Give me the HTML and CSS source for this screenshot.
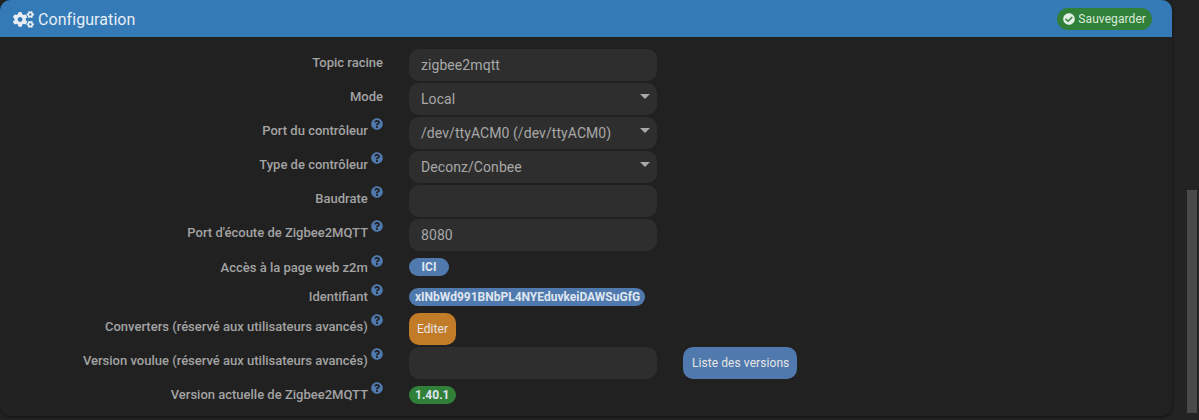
FILE: index.html
```html
<!DOCTYPE html>
<html lang="fr">
<head>
    <meta charset="UTF-8">
    <title>Configuration</title>
    <link rel="stylesheet" href="styles.css">
</head>
<body>

    <svg class="icon-defs" width="0" height="0">
        <symbol id="help" viewBox="0 0 512 512">
            <path d="M504 256c0 136.997-111.043 248-248 248S8 392.997 8 256C8 119.083 119.043 8 256 8s248 111.083 248 248zM262.655 90c-54.497 0-89.255 22.957-116.549 63.758-3.536 5.286-2.353 12.415 2.715 16.258l34.699 26.31c5.205 3.947 12.621 3.008 16.665-2.122 17.864-22.658 30.113-35.797 57.303-35.797 20.429 0 45.698 13.148 45.698 32.958 0 14.976-12.363 22.667-32.534 33.976C247.128 238.528 216 254.941 216 296v4c0 6.627 5.373 12 12 12h56c6.627 0 12-5.373 12-12v-1.333c0-28.462 83.186-29.647 83.186-106.667 0-58.002-60.165-102-116.531-102zM256 338c-25.365 0-46 20.635-46 46 0 25.364 20.635 46 46 46s46-20.636 46-46c0-25.365-20.635-46-46-46z"/>
        </symbol>
    </svg>

    <div class="panel">
        <div class="panel-heading">
            <h3 class="panel-title">
                <svg class="icon-cogs" viewBox="0 0 640 512"><path d="M512.1 191l-8.2 14.3c-3 5.3-9.4 7.5-15.1 5.4-11.8-4.4-22.6-10.7-32.1-18.6-4.6-3.8-5.8-10.5-2.8-15.7l8.2-14.3c-6.9-8-12.3-17.3-15.9-27.4h-16.5c-6 0-11.2-4.3-12.2-10.3-2-12-2.1-24.6 0-37.1 1-6 6.2-10.4 12.2-10.4h16.5c3.6-10.1 9-19.4 15.9-27.4l-8.2-14.3c-3-5.2-1.9-11.9 2.8-15.7 9.5-7.9 20.4-14.2 32.1-18.6 5.7-2.1 12.1.1 15.1 5.4l8.2 14.3c10.5-1.9 21.2-1.9 31.7 0L552 6.3c3-5.3 9.4-7.5 15.1-5.4 11.8 4.4 22.6 10.7 32.1 18.6 4.6 3.8 5.8 10.5 2.8 15.7l-8.2 14.3c6.9 8 12.3 17.3 15.9 27.4h16.5c6 0 11.2 4.3 12.2 10.3 2 12 2.1 24.6 0 37.1-1 6-6.2 10.4-12.2 10.4h-16.5c-3.6 10.1-9 19.4-15.9 27.4l8.2 14.3c3 5.2 1.9 11.9-2.8 15.7-9.5 7.9-20.4 14.2-32.1 18.6-5.7 2.1-12.1-.1-15.1-5.4l-8.2-14.3c-10.4 1.9-21.2 1.9-31.7 0zm-10.5-58.8c38.5 29.6 82.4-14.3 52.8-52.8-38.5-29.7-82.4 14.3-52.8 52.8zM386.3 286.1l33.7 16.8c10.1 5.8 14.5 18.1 10.5 29.1-8.9 24.2-26.4 46.4-42.6 65.8-7.4 8.9-20.2 11.1-30.3 5.3l-29.1-16.8c-16 13.7-34.6 24.6-54.9 31.7v33.6c0 11.6-8.3 21.6-19.7 23.6-24.6 4.2-50.4 4.4-75.9 0-11.5-2-20-11.9-20-23.6V418c-20.3-7.2-38.9-18-54.9-31.7L74 403c-10 5.8-22.9 3.6-30.3-5.3-16.2-19.4-33.3-41.6-42.2-65.7-4-10.9.4-23.2 10.5-29.1l33.3-16.8c-3.9-20.9-3.9-42.4 0-63.4L12 205.8c-10.1-5.8-14.6-18.1-10.5-29 8.9-24.2 26-46.4 42.2-65.8 7.4-8.9 20.2-11.1 30.3-5.3l29.1 16.8c16-13.7 34.6-24.6 54.9-31.7V57.1c0-11.5 8.2-21.5 19.6-23.5 24.6-4.2 50.5-4.4 76-.1 11.5 2 20 11.9 20 23.6v33.6c20.3 7.2 38.9 18 54.9 31.7l29.1-16.8c10-5.8 22.9-3.6 30.3 5.3 16.2 19.4 33.2 41.6 42.1 65.8 4 10.9.1 23.2-10 29.1l-33.7 16.8c3.9 21 3.9 42.5 0 63.5zm-117.6 21.1c59.2-77-28.7-164.9-105.7-105.7-59.2 77 28.7 164.9 105.7 105.7zm243.4 182.7l-8.2 14.3c-3 5.3-9.4 7.5-15.1 5.4-11.8-4.4-22.6-10.7-32.1-18.6-4.6-3.8-5.8-10.5-2.8-15.7l8.2-14.3c-6.9-8-12.3-17.3-15.9-27.4h-16.5c-6 0-11.2-4.3-12.2-10.3-2-12-2.1-24.6 0-37.1 1-6 6.2-10.4 12.2-10.4h16.5c3.6-10.1 9-19.4 15.9-27.4l-8.2-14.3c-3-5.2-1.9-11.9 2.8-15.7 9.5-7.9 20.4-14.2 32.1-18.6 5.7-2.1 12.1.1 15.1 5.4l8.2 14.3c10.5-1.9 21.2-1.9 31.7 0l8.2-14.3c3-5.3 9.4-7.5 15.1-5.4 11.8 4.4 22.6 10.7 32.1 18.6 4.6 3.8 5.8 10.5 2.8 15.7l-8.2 14.3c6.9 8 12.3 17.3 15.9 27.4h16.5c6 0 11.2 4.3 12.2 10.3 2 12 2.1 24.6 0 37.1-1 6-6.2 10.4-12.2 10.4h-16.5c-3.6 10.1-9 19.4-15.9 27.4l8.2 14.3c3 5.2 1.9 11.9-2.8 15.7-9.5 7.9-20.4 14.2-32.1 18.6-5.7 2.1-12.1-.1-15.1-5.4l-8.2-14.3c-10.4 1.9-21.2 1.9-31.7 0zM501.6 431c38.5 29.6 82.4-14.3 52.8-52.8-38.5-29.6-82.4 14.3-52.8 52.8z"/></svg>
                Configuration
            </h3>
            <a class="btn-save">
                <svg class="icon-check" viewBox="0 0 512 512"><path d="M504 256c0 136.967-111.033 248-248 248S8 392.967 8 256 119.033 8 256 8s248 111.033 248 248zM227.314 387.314l184-184c6.248-6.248 6.248-16.379 0-22.627l-22.627-22.627c-6.248-6.249-16.379-6.249-22.628 0L216 308.118l-70.059-70.059c-6.248-6.248-16.379-6.248-22.628 0l-22.627 22.627c-6.248 6.248-6.248 16.379 0 22.627l104 104c6.249 6.249 16.379 6.249 22.628 0z"/></svg>
                Sauvegarder
            </a>
        </div>

        <form class="panel-body">
            <div class="form-row">
                <label class="form-label">Topic racine</label>
                <input class="form-control" type="text" value="zigbee2mqtt">
            </div>
            <div class="form-row">
                <label class="form-label">Mode</label>
                <div class="select-wrap">
                    <select class="form-control"><option>Local</option></select>
                </div>
            </div>
            <div class="form-row">
                <label class="form-label">Port du contrôleur <svg class="help"><use href="#help"/></svg></label>
                <div class="select-wrap">
                    <select class="form-control"><option>/dev/ttyACM0 (/dev/ttyACM0)</option></select>
                </div>
            </div>
            <div class="form-row">
                <label class="form-label">Type de contrôleur <svg class="help"><use href="#help"/></svg></label>
                <div class="select-wrap">
                    <select class="form-control"><option>Deconz/Conbee</option></select>
                </div>
            </div>
            <div class="form-row">
                <label class="form-label">Baudrate <svg class="help"><use href="#help"/></svg></label>
                <input class="form-control" type="text">
            </div>
            <div class="form-row">
                <label class="form-label">Port d'écoute de Zigbee2MQTT <svg class="help"><use href="#help"/></svg></label>
                <input class="form-control" type="text" value="8080">
            </div>
            <div class="form-row form-row-small">
                <label class="form-label form-label-low">Accès à la page web z2m <svg class="help"><use href="#help"/></svg></label>
                <span class="pill pill-ici">ICI</span>
            </div>
            <div class="form-row form-row-small">
                <label class="form-label">Identifiant <svg class="help"><use href="#help"/></svg></label>
                <span class="pill pill-id">xINbWd991BNbPL4NYEduvkeiDAWSuGfG</span>
            </div>
            <div class="form-row">
                <label class="form-label">Converters (réservé aux utilisateurs avancés) <svg class="help"><use href="#help"/></svg></label>
                <a class="btn btn-warning">Editer</a>
            </div>
            <div class="form-row">
                <label class="form-label">Version voulue (réservé aux utilisateurs avancés) <svg class="help"><use href="#help"/></svg></label>
                <input class="form-control" type="text">
                <a class="btn btn-primary">Liste des versions</a>
            </div>
            <div class="form-row form-row-small">
                <label class="form-label">Version actuelle de Zigbee2MQTT <svg class="help"><use href="#help"/></svg></label>
                <span class="pill pill-success">1.40.1</span>
            </div>
        </form>
    </div>

    <div class="scrollbar"></div>

</body>
</html>
```

FILE: styles.css
```css
html, body {
    height: 100%;
}
body {
    font-family: 'Roboto', sans-serif;
    font-size: 13px;
    background-color: #232323;
    color: #aaa;
    margin: 0;
    overflow: hidden;
}
.icon-defs {
    position: absolute;
}
.panel {
    width: 1172px;
    height: 416px;
    background-color: #212121;
    border-radius: 10px;
    box-shadow: 0 1px 3px rgba(0, 0, 0, 0.5);
}
.panel-heading {
    height: 37px;
    box-sizing: border-box;
    display: flex;
    justify-content: space-between;
    align-items: center;
    padding: 1px 20px 0 13px;
    background-color: #337ab7;
    border-radius: 10px 10px 0 0;
}
.panel-title {
    display: flex;
    align-items: center;
    gap: 4px;
    margin: 0;
    font-size: 16px;
    font-weight: 400;
    letter-spacing: 0.07px;
    color: #e8eef4;
}
.icon-cogs {
    width: 21px;
    height: 17px;
    fill: #e8eef4;
}
.btn-save {
    display: flex;
    align-items: center;
    gap: 3px;
    height: 22px;
    padding: 0 6px;
    border-radius: 11px;
    background-color: #318039;
    color: #dcebdc;
    font-size: 12px;
    letter-spacing: 0.08px;
}
.icon-check {
    width: 12px;
    height: 12px;
    fill: #e4efe4;
}
.panel-body {
    padding-top: 12px;
}
.form-row {
    display: flex;
    align-items: center;
    height: 32px;
    margin-bottom: 2px;
}
.form-row-small {
    height: 28px;
}
.form-label {
    align-self: flex-start;
    width: 383px;
    margin-right: 26px;
    padding-top: 6px;
    flex-shrink: 0;
    text-align: right;
    line-height: 15px;
    font-size: 13px;
    font-weight: 500;
    color: #a3a3a3;
    white-space: nowrap;
}
.form-label-low {
    padding-top: 7px;
}
.help {
    width: 12px;
    height: 12px;
    margin-top: -8px;
    fill: #5079ae;
    vertical-align: 5px;
}
.form-control {
    display: block;
    width: 248px;
    height: 32px;
    box-sizing: border-box;
    padding: 0 12px;
    border: none;
    border-radius: 10px;
    background-color: #2e2e2e;
    color: #a8a8a8;
    font-family: 'Roboto', sans-serif;
    font-size: 14px;
    letter-spacing: 0.07px;
    outline: none;
    appearance: none;
}
.select-wrap {
    position: relative;
}
.select-wrap::after {
    content: "";
    position: absolute;
    top: 11px;
    right: 7px;
    border-left: 5px solid transparent;
    border-right: 5px solid transparent;
    border-top: 5px solid #a8a8a8;
}
.pill {
    height: 18px;
    line-height: 18px;
    padding: 0 6px;
    border-radius: 9px;
    color: #dfe6ef;
    font-size: 12px;
    font-weight: 700;
    white-space: nowrap;
}
.pill-ici {
    width: 28px;
    text-align: center;
    background-color: #5079ae;
}
.pill-id {
    padding-right: 5px;
    background-color: #5079ae;
}
.pill-success {
    background-color: #318039;
}
.btn {
    display: flex;
    align-items: center;
    height: 32px;
    box-sizing: border-box;
    padding: 0 8px;
    border-radius: 10px;
    color: #e6e6e6;
    font-size: 12px;
    letter-spacing: 0.07px;
}
.btn-warning {
    background-color: #c27c28;
}
.btn-primary {
    margin-left: 26px;
    padding: 0 8px 0 9px;
    background-color: #5079ae;
}
.scrollbar {
    position: fixed;
    left: 1187px;
    top: 190px;
    width: 10px;
    height: 223px;
    background-color: #4a4a4a;
}
```
